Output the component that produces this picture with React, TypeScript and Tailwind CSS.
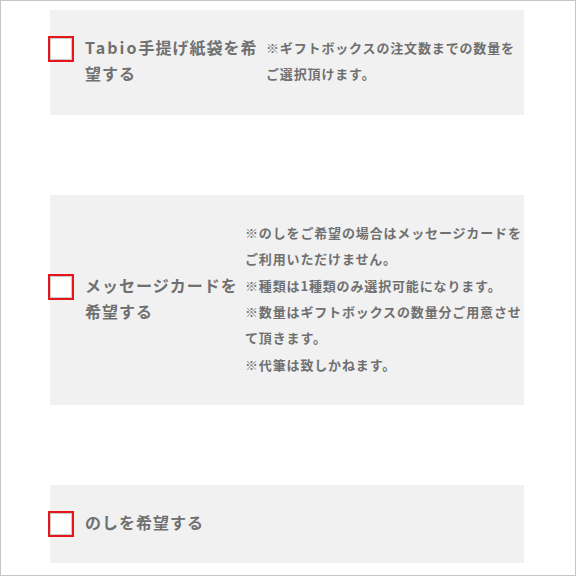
const FONT = "font-['Noto_Sans_CJK_JP','Noto_Sans',sans-serif]";

type Option = {
  label: React.ReactNode[];
  labelWidth: string;
  notes: string[];
};

const OPTIONS: Option[] = [
  {
    label: [
      <>
        <span className="tracking-[2px]">Tabio</span>手提げ紙袋を希
      </>,
      '望する',
    ],
    labelWidth: 'w-[181px]',
    notes: ['※ギフトボックスの注文数までの数量を', 'ご選択頂けます。'],
  },
  {
    label: ['メッセージカードを', '希望する'],
    labelWidth: 'w-[160px]',
    notes: [
      '※のしをご希望の場合はメッセージカードを',
      'ご利用いただけません。',
      '※種類は1種類のみ選択可能になります。',
      '※数量はギフトボックスの数量分ご用意させ',
      'て頂きます。',
      '※代筆は致しかねます。',
    ],
  },
  {
    label: ['のしを希望する'],
    labelWidth: 'w-[181px]',
    notes: [],
  },
];

function CheckBox() {
  return (
    <span className="-ml-[2px] mr-[11px] block h-[26px] w-[26px] shrink-0 border-2 border-[#e8151b] bg-white">
      <span className="block h-full w-full border border-[#c9c9c9]" />
    </span>
  );
}

function OptionRow({ option }: { option: Option }) {
  return (
    <div className="flex items-center bg-[#f1f1f1] py-[26px]">
      <div className="flex items-start">
        <CheckBox />
        <div className={`${option.labelWidth} -mt-[2px] pb-[2px] text-[16px] font-bold leading-[26px] tracking-[1px] text-[#707070]`}>
          {option.label.map((line, i) => (
            <div key={i} className="whitespace-nowrap">{line}</div>
          ))}
        </div>
      </div>
      {option.notes.length > 0 && (
        <div className="-mt-[1px] pb-[1px] text-[13px] font-bold leading-[26.4px] tracking-[0.85px] text-[#707070]">
          {option.notes.map((line) => (
            <div key={line} className="whitespace-nowrap">{line}</div>
          ))}
        </div>
      )}
    </div>
  );
}

export default function App() {
  return (
    <div className={`${FONT} h-[576px] w-[576px] border border-[#c6c6c6] bg-white`}>
      <div className="ml-[49px] mt-[9px] flex w-[474px] flex-col gap-[80px]">
        {OPTIONS.map((option, i) => (
          <OptionRow key={i} option={option} />
        ))}
      </div>
    </div>
  );
}
